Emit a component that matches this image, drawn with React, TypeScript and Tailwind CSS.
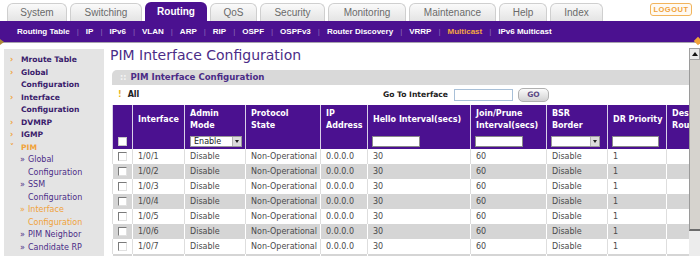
import React from "react";

const tabs = [
  { label: "System", cls: "w-[60px]" },
  { label: "Switching", cls: "w-[72px]" },
  { label: "Routing", cls: "w-[62px]", active: true },
  { label: "QoS", cls: "w-[47px]" },
  { label: "Security", cls: "w-[65px]" },
  { label: "Monitoring", cls: "w-[78px]" },
  { label: "Maintenance", cls: "w-[87px]" },
  { label: "Help", cls: "w-[48px]" },
  { label: "Index", cls: "w-[53px]" },
];

const subMenu = [
  "Routing Table",
  "IP",
  "IPv6",
  "VLAN",
  "ARP",
  "RIP",
  "OSPF",
  "OSPFv3",
  "Router Discovery",
  "VRRP",
  "Multicast",
  "IPv6 Multicast",
];

type NavItem = { t: string; sub?: boolean; active?: boolean; open?: boolean };

const nav: NavItem[] = [
  { t: "Mroute Table" },
  { t: "Global Configuration" },
  { t: "Interface Configuration" },
  { t: "DVMRP" },
  { t: "IGMP" },
  { t: "PIM", active: true, open: true },
  { t: "Global Configuration", sub: true },
  { t: "SSM Configuration", sub: true },
  { t: "Interface Configuration", sub: true, active: true },
  { t: "PIM Neighbor", sub: true },
  { t: "Candidate RP", sub: true },
];

const colWidths = [20, 52, 61, 75, 47, 103, 76, 61, 59, 60];

const headers: string[][] = [
  [],
  ["Interface"],
  ["Admin", "Mode"],
  ["Protocol", "State"],
  ["IP", "Address"],
  ["Hello Interval(secs)"],
  ["Join/Prune", "Interval(secs)"],
  ["BSR", "Border"],
  ["DR Priority"],
  ["Des", "Rou"],
];

const rows = ["1/0/1", "1/0/2", "1/0/3", "1/0/4", "1/0/5", "1/0/6", "1/0/7"];

function OldCheckbox() {
  return (
    <span className="block w-[9px] h-[9px] bg-white border border-t-[#7a7a7a] border-l-[#7a7a7a] border-r-[#e0e0e0] border-b-[#e0e0e0]" />
  );
}

function MiniSelect({ value, w }: { value: string; w: string }) {
  return (
    <div className={`${w} h-[11px] bg-white border border-[#9a9a9a] flex items-stretch`}>
      <span className="flex-1 pl-[3px] text-[8px] leading-[9px] text-[#222]">{value}</span>
      <span className="w-[9px] bg-[#dcdcdc] border-l border-[#b5b5b5] flex items-center justify-center">
        <span className="w-0 h-0 border-l-[2px] border-r-[2px] border-t-[3px] border-l-transparent border-r-transparent border-t-[#222]" />
      </span>
    </div>
  );
}

function TextBox({ w }: { w: string }) {
  return <div className={`${w} h-[11px] bg-white border border-[#8a8a8a]`} />;
}

export default function App() {
  return (
    <div className="relative w-[700px] h-[256px] overflow-hidden bg-white font-['DejaVu_Sans',Verdana,sans-serif]">
      {/* top tabs */}
      <div className="flex items-end h-[21px] pl-[7px] gap-[3px] font-['Liberation_Sans',Arial,sans-serif]">
        {tabs.map((t) =>
          t.active ? (
            <div
              key={t.label}
              className={`${t.cls} h-[19px] rounded-t-[6px] bg-[#4b1190] text-white font-bold text-[10px] flex items-center justify-center`}
            >
              {t.label}
            </div>
          ) : (
            <div
              key={t.label}
              className={`${t.cls} h-[18px] rounded-t-[6px] border border-b-0 border-[#cfcfcf] bg-gradient-to-b from-[#fafafa] to-[#e4e4e4] text-[#6a6a6a] text-[10px] flex items-center justify-center`}
            >
              {t.label}
            </div>
          )
        )}
        <div className="self-start mt-[3px] ml-auto mr-[8px] w-[42px] h-[13px] rounded-[3px] border border-[#f2b45c] bg-[#fffaf2] text-[#f0a23a] text-[7.5px] font-bold tracking-[0.5px] flex items-center justify-center">
          LOGOUT
        </div>
      </div>

      {/* purple sub menu */}
      <div className="h-[21px] bg-[#4b1190] flex items-center pl-[17px] gap-[7px] font-['Liberation_Sans',Arial,sans-serif] text-[8px] font-bold">
        {subMenu.map((s, i) => (
          <React.Fragment key={s}>
            {i > 0 && <span className="text-[#8c6cb8] font-normal">|</span>}
            <span className={s === "Multicast" ? "text-[#f3a640]" : "text-white"}>{s}</span>
          </React.Fragment>
        ))}
      </div>
      <div className="h-px bg-[#a7a3ad]" />
      <span className="absolute left-0 top-[39px] w-0 h-0 border-t-[3px] border-b-[3px] border-l-[4px] border-t-transparent border-b-transparent border-l-[#b08a3a]" />
      <span className="absolute left-[695px] top-[38px] w-[6px] h-[6px] rotate-45 bg-[#f0a23a]" />

      {/* body */}
      <div className="flex h-[213px]">
        {/* sidebar */}
        <div className="ml-[4px] mt-[6px] w-[100px] bg-[#e4e4e4] pt-[5px] pr-[2px]">
          {nav.map((n, i) => (
            <div
              key={i}
              className={`flex leading-[12.5px] ${n.sub ? "pl-[16px]" : "pl-[6px]"}`}
            >
              <span
                className={`shrink-0 ${n.sub ? "w-[8px] text-[8px]" : "w-[11px] text-[8px] font-bold"} ${
                  n.active || !n.sub ? "text-[#f0a23a]" : "text-[#4b2c87]"
                }`}
              >
                {n.sub ? "»" : n.open ? "˅" : "›"}
              </span>
              <span
                className={`${n.sub ? "w-[64px] text-[8px]" : "text-[7.6px] font-bold"} ${
                  n.active ? "text-[#f0a23a]" : n.sub ? "text-[#4b2c87]" : "text-[#3b1c6c]"
                }`}
              >
                {n.t}
              </span>
            </div>
          ))}
        </div>

        {/* main */}
        <div className="flex-1 min-w-0 overflow-hidden pt-[4px]">
          <h1 className="pl-[6px] text-[14px] leading-[16px] text-[#4b2c87]">PIM Interface Configuration</h1>
          <div className="ml-[8px] mt-[7px] w-[614px]">
            <div className="h-[15px] rounded-t-[5px] bg-[#d9d9d9] flex items-center pl-[8px] gap-[4px]">
              <span className="text-[#f4f4f4] text-[8px] font-bold">::</span>
              <span className="text-[8.6px] font-bold text-[#4b2c87]">PIM Interface Configuration</span>
            </div>
            <div className="h-[20px] flex items-center text-[8px] font-bold text-[#222]">
              <div className="w-[271px] flex items-center pl-[6px] gap-[6px]">
                <span className="text-[#e7b21e]">!</span>
                <span>All</span>
              </div>
              <span className="text-[7.6px]">Go To Interface</span>
              <div className="ml-[6px] w-[59px] h-[12px] bg-white border border-[#a8c0d8]" />
              <div className="ml-[5px] w-[31px] h-[14px] rounded-[5px] border border-[#b0b0b0] bg-gradient-to-b from-[#fbfbfb] to-[#d2d2d2] flex items-center justify-center text-[7.5px] text-[#5c4a85]">
                GO
              </div>
            </div>

            <table className="table-fixed border-collapse text-[8px]" style={{ width: colWidths.reduce((a, b) => a + b, 0) }}>
              <colgroup>
                {colWidths.map((w, i) => (
                  <col key={i} style={{ width: w }} />
                ))}
              </colgroup>
              <thead>
                <tr className="h-[29px] bg-[#4b1190]">
                  {headers.map((h, i) => (
                    <th
                      key={i}
                      className="border-x border-[#d9d0e8] text-left align-middle pl-[5px] font-bold text-white leading-[12px] whitespace-nowrap"
                    >
                      {h.map((l) => (
                        <div key={l}>{l}</div>
                      ))}
                    </th>
                  ))}
                </tr>
                <tr className="h-[15px] bg-[#4b1190]">
                  <td className="border-x border-[#d9d0e8] pl-[5px]">
                    <span className="block w-[9px] h-[9px] bg-white border border-[#c8c8c8]" />
                  </td>
                  <td className="border-x border-[#d9d0e8]" />
                  <td className="border-x border-[#d9d0e8] pl-[5px]">
                    <MiniSelect value="Enable" w="w-[52px]" />
                  </td>
                  <td className="border-x border-[#d9d0e8]" />
                  <td className="border-x border-[#d9d0e8]" />
                  <td className="border-x border-[#d9d0e8] pl-[4px]">
                    <TextBox w="w-[48px]" />
                  </td>
                  <td className="border-x border-[#d9d0e8] pl-[4px]">
                    <TextBox w="w-[48px]" />
                  </td>
                  <td className="border-x border-[#d9d0e8] pl-[4px]">
                    <MiniSelect value="" w="w-[49px]" />
                  </td>
                  <td className="border-x border-[#d9d0e8] pl-[4px]">
                    <TextBox w="w-[47px]" />
                  </td>
                  <td className="border-x border-[#d9d0e8]" />
                </tr>
              </thead>
              <tbody className="text-[#4a4a4a]">
                {rows.map((r, i) => {
                  const gray = i % 2 === 1;
                  const cell = gray
                    ? "border-x border-white pl-[5px] whitespace-nowrap"
                    : "border-x border-[#dedede] pl-[5px] whitespace-nowrap";
                  return (
                    <tr key={r} className={`h-[15px] ${gray ? "bg-[#d5d5d5]" : "bg-white"}`}>
                      <td className={cell}>
                        <OldCheckbox />
                      </td>
                      <td className={cell}>{r}</td>
                      <td className={cell}>Disable</td>
                      <td className={cell}>Non-Operational</td>
                      <td className={cell}>0.0.0.0</td>
                      <td className={cell}>30</td>
                      <td className={cell}>60</td>
                      <td className={cell}>Disable</td>
                      <td className={cell}>1</td>
                      <td className={cell} />
                    </tr>
                  );
                })}
                {/* next row, only its top edge shows in the window */}
                <tr className="h-[15px] bg-[#d5d5d5]">
                  {colWidths.map((_, i) => (
                    <td key={i} className="border-x border-white" />
                  ))}
                </tr>
              </tbody>
            </table>
          </div>
        </div>

        {/* scrollbar */}
        <div className="w-[11px] mt-[5px] flex flex-col bg-[#ececec]">
          <div className="h-[12px] bg-[#e8e8e8] border border-[#a0a0a0] flex items-center justify-center">
            <span className="w-0 h-0 border-l-[3px] border-r-[3px] border-b-[4px] border-l-transparent border-r-transparent border-b-[#111]" />
          </div>
          <div className="h-[171px] bg-[#d6d3ce] border-l border-[#9a9a9a] border-b-2 border-b-[#6c6c6c]" />
        </div>
      </div>
    </div>
  );
}
